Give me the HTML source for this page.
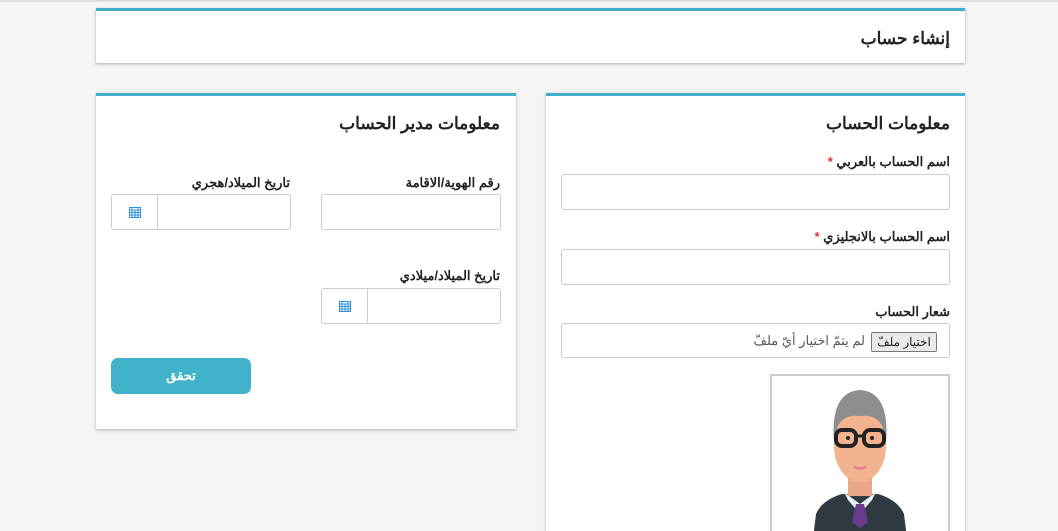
<!DOCTYPE html>
<html style="overflow:hidden;height:531px"><head><meta charset="utf-8"><style>
html,body{margin:0;width:1058px;height:531px;overflow:hidden}
body{background:#f5f5f5;font-family:"Liberation Sans","Noto Sans CJK SC",sans-serif;position:relative}
.a{position:absolute}
.card{position:absolute;background:#fff;border-top:3px solid #41b0c8;box-shadow:0 1px 3px rgba(0,0,0,.3)}
.t{position:absolute;direction:rtl;text-align:right;font-weight:bold;color:#222;white-space:nowrap}
.in{position:absolute;background:#fff;border:1px solid #ccc;border-radius:3px;box-sizing:border-box}
.cal{position:absolute;left:0;top:0;bottom:0;width:45px;border-right:1px solid #ccc;display:flex;align-items:center;justify-content:center}
.r{color:#d33}
</style></head><body>
<div class="a" style="left:0;top:0;width:1058px;height:2px;background:#ddd"></div>
<div class="card" style="left:96px;top:8px;width:869px;height:52px"></div>
<div class="t" style="right:108px;top:29px;font-size:17px">إنشاء حساب</div>

<div class="card" style="left:546px;top:93px;width:419px;height:440px"></div>
<div class="t" style="right:108px;top:114px;font-size:17px">معلومات الحساب</div>
<div class="t" style="right:108px;top:154px;font-size:13px">اسم الحساب بالعربي <span class="r">*</span></div>
<div class="in" style="left:561px;top:174px;width:389px;height:36px"></div>
<div class="t" style="right:108px;top:229px;font-size:13px">اسم الحساب بالانجليزي <span class="r">*</span></div>
<div class="in" style="left:561px;top:249px;width:389px;height:36px"></div>
<div class="t" style="right:108px;top:304px;font-size:13px">شعار الحساب</div>
<div class="in" style="left:561px;top:323px;width:389px;height:35px"></div>
<div class="a" style="left:871px;top:332px;width:64px;height:18px;border:1px solid #777;background:#e9e9e9;border-radius:2px;font-size:12px;text-align:center;line-height:18px;color:#222">اختيار ملفّ</div>
<div class="t" style="right:193px;top:333px;font-size:13px;font-weight:normal;color:#555">لم يتمّ اختيار أيّ ملفّ</div>
<div class="a" style="left:770px;top:374px;width:176px;height:170px;border:2px solid #ccc;background:#fff;overflow:hidden">
<svg width="176" height="170" viewBox="0 0 176 170">
<path d="M40 170 L44 138 Q50 124 70 118 L106 118 Q126 124 132 138 L136 170Z" fill="#2f3b41"/>
<path d="M72 116 L88 128 L104 116 L100 124 L88 138 L76 124Z" fill="#e6f0f6"/>
<path d="M84 128 L92 128 L96 146 L88 152 L80 146Z" fill="#6a3a8e"/>
<rect x="76" y="92" width="24" height="28" fill="#eaa688"/>
<ellipse cx="88" cy="70" rx="26" ry="36" fill="#f3b38f"/>
<path d="M62 66 Q58 16 88 14 Q118 16 114 66 L110 50 Q104 38 88 40 Q72 38 66 50Z" fill="#8e8e8e"/>
<rect x="64" y="54" width="20" height="16" rx="6" fill="none" stroke="#222" stroke-width="4"/>
<rect x="92" y="54" width="20" height="16" rx="6" fill="none" stroke="#222" stroke-width="4"/>
<path d="M84 60 L92 60" stroke="#222" stroke-width="3"/>
<circle cx="76" cy="62" r="2" fill="#222"/><circle cx="100" cy="62" r="2" fill="#222"/>
<path d="M82 91 Q88 94 94 91" stroke="#d88" stroke-width="3" fill="none"/>
</svg></div>

<div class="card" style="left:96px;top:93px;width:420px;height:333px"></div>
<div class="t" style="right:558px;top:114px;font-size:17px">معلومات مدير الحساب</div>
<div class="t" style="right:558px;top:175px;font-size:13px">رقم الهوية/الاقامة</div>
<div class="in" style="left:321px;top:194px;width:180px;height:36px"></div>
<div class="t" style="right:768px;top:175px;font-size:13px">تاريخ الميلاد/هجري</div>
<div class="in" style="left:111px;top:194px;width:180px;height:36px"><div class="cal"><svg width="12" height="12" viewBox="0 0 12 12"><rect x="0.5" y="1.5" width="11" height="10" fill="none" stroke="#2f8fe0"/><path d="M0 4h12M3 1v3M9 1v3M0 6.5h12M0 9h12M3 4v8M6 4v8M9 4v8" stroke="#2f8fe0" stroke-width="1"/></svg></div></div>
<div class="t" style="right:558px;top:268px;font-size:13px">تاريخ الميلاد/ميلادي</div>
<div class="in" style="left:321px;top:288px;width:180px;height:36px"><div class="cal"><svg width="12" height="12" viewBox="0 0 12 12"><rect x="0.5" y="1.5" width="11" height="10" fill="none" stroke="#2f8fe0"/><path d="M0 4h12M3 1v3M9 1v3M0 6.5h12M0 9h12M3 4v8M6 4v8M9 4v8" stroke="#2f8fe0" stroke-width="1"/></svg></div></div>
<div class="a" style="left:111px;top:358px;width:140px;height:36px;background:#40b2c9;border-radius:7px;color:#fff;font-size:13px;font-weight:bold;text-align:center;line-height:36px">تحقق</div>
</body></html>
